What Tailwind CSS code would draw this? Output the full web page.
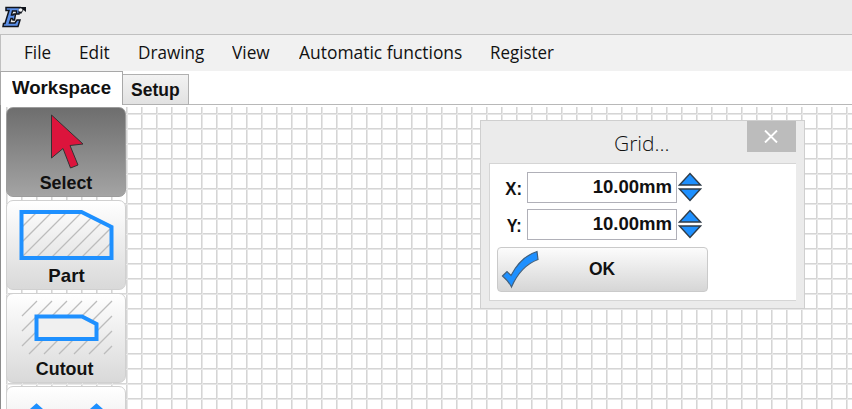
<!DOCTYPE html>
<html lang="en">
<head>
<meta charset="utf-8">
<title>Workspace</title>
<script src="https://cdn.jsdelivr.net/npm/@tailwindcss/browser@4"></script>
</head>
<body class="relative flex h-[409px] w-[852px] flex-col overflow-hidden bg-white font-['Liberation_Sans',sans-serif] text-[#111]">
<header class="h-[34px] shrink-0 bg-[#ebebeb] pl-[2px] pt-[6px]">
  <svg width="25" height="22" viewBox="0 0 25 22"><path d="M4 1.500H18L17 8H14.500V5H10.500L9.500 9H11L12 8H13.500L12.500 14H11L10.500 12.500H9L7.500 17H13L15 14H18L16 20.500H1L1.500 17.500H3L7 4.500H4Z" fill="#5b8fe8" stroke="#10141c" stroke-width="1.500"/><path d="M17 1H24V6L21.500 4L19 8L16.500 6Z" fill="#10141c"/><ellipse cx="18.500" cy="4" rx="2" ry="1.700" fill="#f4f4f4"/></svg>
</header>
<nav class="flex h-[37px] shrink-0 items-center border-t border-l border-[#c0c0c0] bg-[#f1f1f1] pb-[2px] pl-[23px] font-['Open_Sans',sans-serif] text-[18px] leading-none whitespace-nowrap">
  <div class="w-[55px]"><span class="inline-block origin-left scale-x-[.95]">File</span></div>
  <div class="w-[59px]"><span class="inline-block origin-left scale-x-[.96]">Edit</span></div>
  <div class="w-[94px]"><span class="inline-block origin-left scale-x-[.95]">Drawing</span></div>
  <div class="w-[67px]"><span class="inline-block origin-left scale-x-[.96]">View</span></div>
  <div class="w-[191px]"><span class="inline-block origin-left scale-x-[.968]">Automatic functions</span></div>
  <div><span class="inline-block origin-left scale-x-[.94]">Register</span></div>
</nav>
<div class="flex h-[34px] shrink-0 items-end text-[19px] leading-none font-bold whitespace-nowrap">
  <div class="flex h-[34px] w-[123px] justify-center border border-b-0 border-[#a8a8a8] pt-[6px]"><span class="inline-block scale-x-[.98]">Workspace</span></div>
  <div class="flex h-[31px] w-[66px] justify-center border border-l-0 border-[#b0b0b0] bg-linear-to-b from-[#f2f2f2] to-[#e2e2e2] pt-[5px]"><span class="inline-block scale-x-[.92]">Setup</span></div>
  <div class="h-full flex-1 border-b border-[#b8b8b8]"></div>
</div>
<main class="relative h-[304px] overflow-hidden border-l border-[#8c8c8c]">
  <svg class="absolute top-[2px] left-[5px]" width="846" height="302">
    <defs><pattern id="grid" width="15" height="15" patternUnits="userSpaceOnUse"><path d="M0 6H15V7H0ZM0 0H1V15H0Z" fill="#d5d5d5"/><path d="M0 7H15V8H0ZM1 0H2V15H1Z" fill="#e7e7e7"/></pattern></defs>
    <rect width="846" height="302" fill="url(#grid)"/>
  </svg>
  <aside class="relative flex w-[126px] flex-col gap-[3px] pt-[2px] pl-[5px] text-center text-[19px] font-bold">
    <button class="flex h-[90px] w-[120px] shrink-0 flex-col items-center rounded-[7px] border border-[#9c9c9c] bg-linear-to-b from-[#6e6e6e] to-[#a4a4a4]">
      <svg width="118" height="65" viewBox="0 0 118 65"><path d="M44.500 7V50L56 40.500L63.500 60L71 57L63 37.500L76 36Z" fill="#dc143c" stroke="#333" stroke-width="1"/></svg>
      <span class="inline-block scale-x-[.94] leading-[20px]">Select</span>
    </button>
    <button class="flex h-[90px] w-[120px] shrink-0 flex-col items-center rounded-[7px] border border-[#d0d0d0] bg-linear-to-b from-white to-[#d9d9d9]">
      <svg class="-mb-[1px]" width="118" height="66" viewBox="0 0 118 66"><clipPath id="pc"><path d="M14.500 11H74.500L104.500 26V57H14.500Z"/></clipPath><path clip-path="url(#pc)" d="M-16 57L30 11M-1 57L45 11M14 57L60 11M29 57L75 11M44 57L90 11M59 57L105 11M74 57L120 11M89 57L135 11" stroke="#bcbcbc" stroke-width="1.300"/><path d="M14.500 11H74.500L104.500 26V57H14.500Z" fill="none" stroke="#1e90ff" stroke-width="4"/></svg>
      <span class="inline-block scale-x-[.98] leading-[20px]">Part</span>
    </button>
    <button class="flex h-[90px] w-[120px] shrink-0 flex-col items-center rounded-[7px] border border-[#d0d0d0] bg-linear-to-b from-white to-[#d9d9d9]">
      <svg class="-mb-[1px]" width="118" height="66" viewBox="0 0 118 66"><path d="M15 22L30 7M15 37L45 7M15 52L60 7M22 60L75 7M37 60L90 7M52 60L105 7M67 60L105 22M82 60L105 37M97 60L105 52" stroke="#bcbcbc" stroke-width="1.300"/><path d="M29.500 22.500H75L89.500 30V45H29.500Z" fill="#f0f0f0" stroke="#1e90ff" stroke-width="4"/></svg>
      <span class="inline-block -translate-x-px scale-x-[.94] leading-[20px]">Cutout</span>
    </button>
    <button class="h-[90px] w-[120px] shrink-0 rounded-[7px] border border-[#d0d0d0] bg-linear-to-b from-white to-[#d9d9d9]">
      <svg width="118" height="88" viewBox="0 0 118 88"><path d="M14.500 32L29.500 19L44.500 32M74.500 32L89.500 19L104.500 32" fill="none" stroke="#1e90ff" stroke-width="4"/></svg>
    </button>
  </aside>
</main>
<section class="absolute top-[120px] left-[480px] h-[189px] w-[325px] border border-[#cfcfcf] bg-[#ebebeb] pl-2">
  <div class="flex h-[42px] justify-between">
    <h1 class="pl-[125px] pt-[7px] font-['Open_Sans',sans-serif] text-[21px] font-light whitespace-nowrap">Grid...</h1>
    <button class="mr-[8px] flex h-[31px] w-[49px] shrink-0 items-center justify-center bg-[#bcbcbc] pr-px"><svg width="14" height="13" viewBox="0 0 14 13"><path d="M1 .5L13 12.500M13 .5L1 12.500" stroke="#fff" stroke-width="1.900"/></svg></button>
  </div>
  <div class="flex h-[138px] w-[307px] flex-col border border-r-0 border-[#d5d5d5] bg-white pt-[8px] pl-[8px] text-[18px] font-bold">
    <div class="mb-[6px] flex h-[31px]">
      <label class="w-[29px] pt-[7px] pr-[5px] text-right leading-[20px]"><span class="inline-block origin-right scale-x-[.93]">X:</span></label>
      <div class="flex h-[31px] w-[150px] items-center justify-end border border-[#b0b0b8] pr-[4px]"><span class="inline-block origin-right scale-x-[1.03]">10.00mm</span></div>
      <svg class="ml-[1px]" width="24" height="30" viewBox="0 0 24 30"><path d="M1.500 13L12 1.500L22.500 13ZM1.500 17L12 28.500L22.500 17Z" fill="#1e90ff" stroke="#303c48" stroke-width="1.400"/></svg>
    </div>
    <div class="mb-[7px] flex h-[31px]">
      <label class="w-[29px] pt-[7px] pr-[5px] text-right leading-[20px]"><span class="inline-block origin-right scale-x-[.9]">Y:</span></label>
      <div class="flex h-[31px] w-[150px] items-center justify-end border border-[#b0b0b8] pr-[4px]"><span class="inline-block origin-right scale-x-[1.03]">10.00mm</span></div>
      <svg class="ml-[1px]" width="24" height="30" viewBox="0 0 24 30"><path d="M1.500 13L12 1.500L22.500 13ZM1.500 17L12 28.500L22.500 17Z" fill="#1e90ff" stroke="#303c48" stroke-width="1.400"/></svg>
    </div>
    <button class="-ml-px flex h-[45px] w-[211px] items-center rounded-[4px] border border-[#cacaca] bg-linear-to-b from-[#fcfcfc] to-[#d6d6d6]">
      <svg class="ml-[3px]" width="40" height="40" viewBox="0 0 40 40"><path d="M1.500 26L6 21.500L10 25.500C17 12 25 5 36 1.500L37 9.500C25 14 17 22 10.500 37C8 32 5 29 1.500 26Z" fill="#1e90ff" stroke="#42607c" stroke-width="1.200"/></svg>
      <span class="ml-[48px] inline-block origin-left scale-x-[.97]">OK</span>
    </button>
  </div>
</section>
</body>
</html>
